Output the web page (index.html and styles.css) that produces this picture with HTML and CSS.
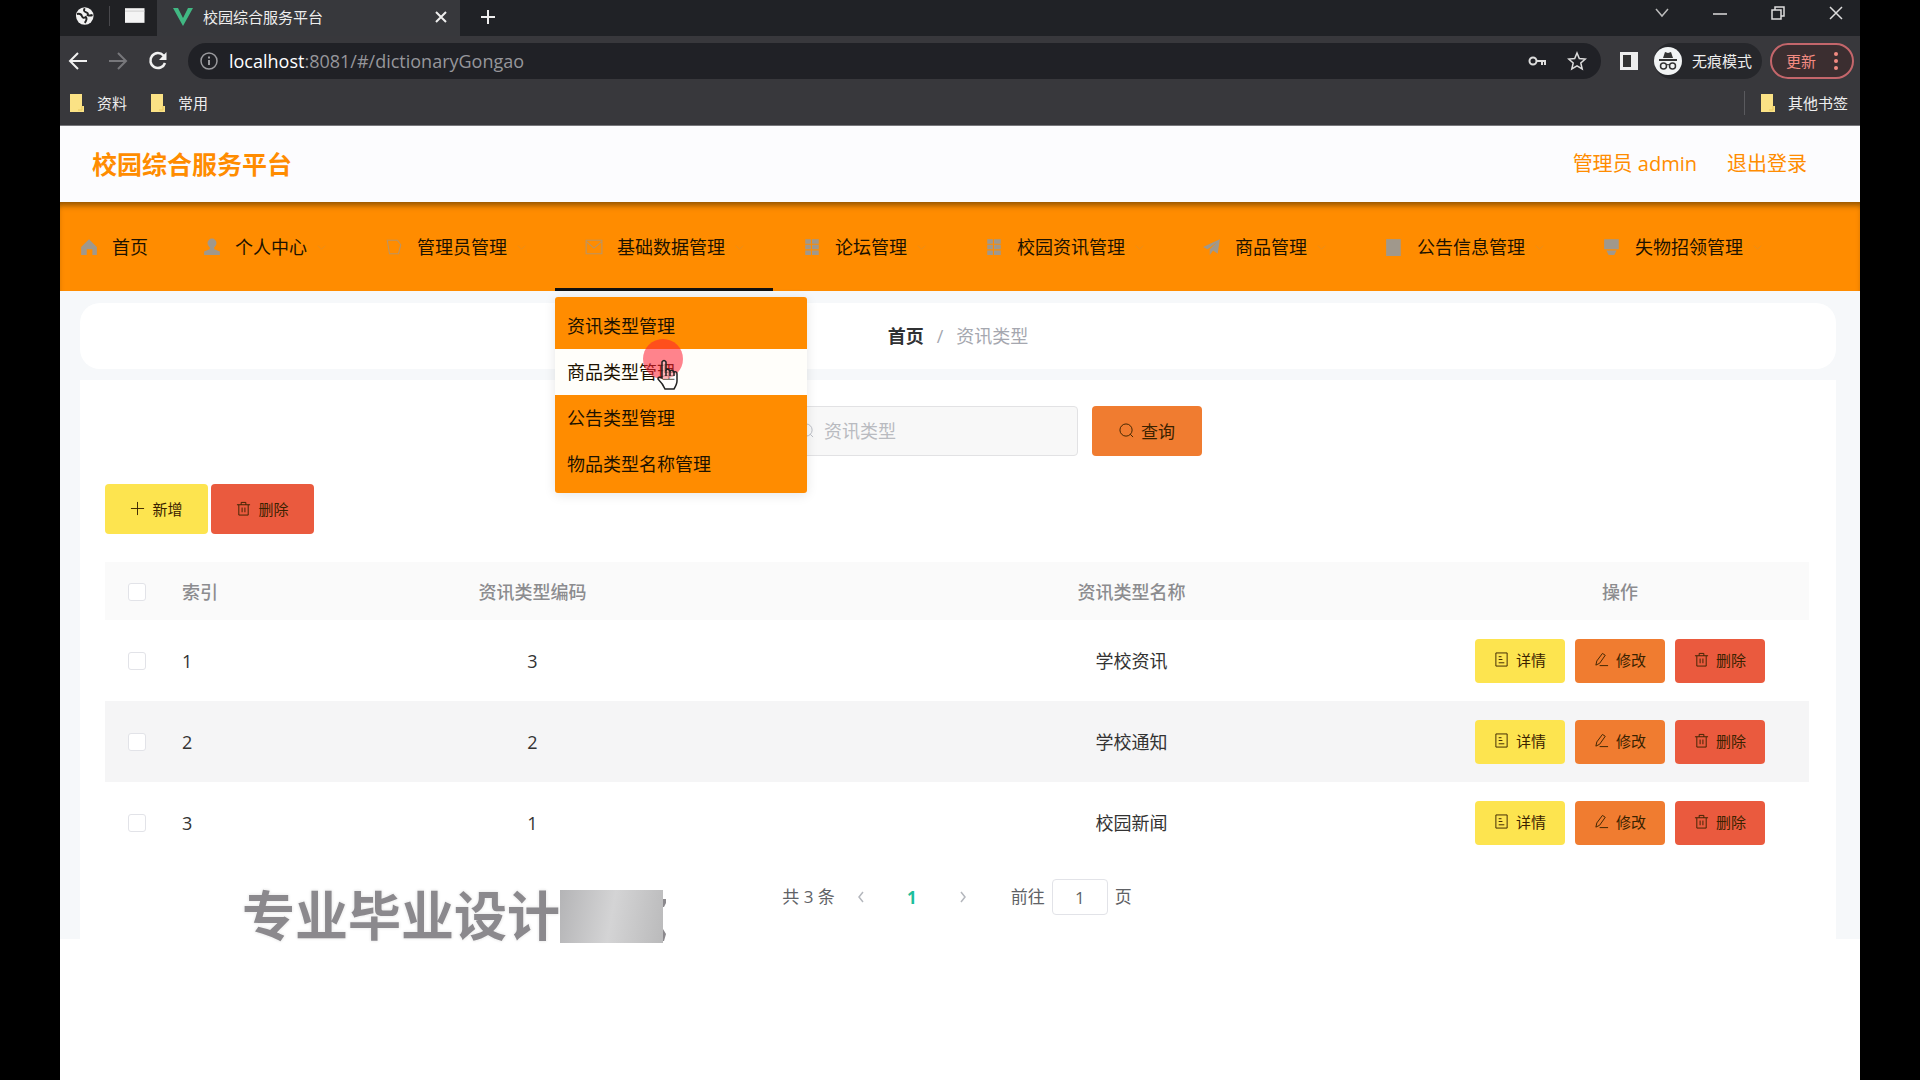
FILE: index.html
```
<!DOCTYPE html>
<html lang="zh-CN">
<head>
  <meta charset="UTF-8">
  <meta name="viewport" content="width=device-width, initial-scale=1.0">
  <title>校园综合服务平台</title>
  <link rel="stylesheet" href="styles.css">
</head>
<body>

  <!-- shared icons -->
  <svg class="sprite" aria-hidden="true">
    <symbol id="i-folder" viewBox="0 0 16 18"><path d="M1 0h12v12h2v6H1z" fill="#fbe285"/><path d="M13 12v4H9" stroke="#e8c95c" fill="none"/></symbol>
    <symbol id="i-list" viewBox="0 0 16 16"><path d="M2 1h5v4H2zM8 1h6v4H8zM2 6h5v4H2zM8 6h6v4H8zM2 11h5v4H2zM8 11h6v4H8z" fill="currentColor"/></symbol>
    <symbol id="i-arrow" viewBox="0 0 10 10"><path d="M1 3l4 4 4-4" stroke="currentColor" fill="none"/></symbol>
    <symbol id="i-trash" viewBox="0 0 16 16"><path d="M1 4h14M3 4v11h10V4M5.500 4V1.500h5V4M6.500 7v5M9.500 7v5" stroke="currentColor" fill="none"/></symbol>
    <symbol id="i-doc" viewBox="0 0 16 16"><path d="M2 1h12v14H2zM5 5h3M5 8h4M5 11.500h6" stroke="currentColor" fill="none"/></symbol>
    <symbol id="i-edit" viewBox="0 0 16 16"><path d="M2 14l1-4.500L9 1.500l3 2-6 8.500zM6 14.500h9" stroke="currentColor" fill="none"/></symbol>
    <symbol id="i-search" viewBox="0 0 16 16"><circle cx="7.500" cy="7.500" r="6.500" stroke="currentColor" fill="none"/><path d="M12 12l3 3" stroke="currentColor"/></symbol>
  </svg>

  <div class="browser">
    <div class="tab-strip">
      <div class="pinned">
        <svg width="20" height="20" viewBox="0 0 20 20"><circle cx="10" cy="10" r="9" fill="#f1f1f1"/><path d="M2 8q4-1 5 2t4 1q2 2-1 6M10 2q-2 3 1 4t2 3q2 1 5 0" stroke="#222" stroke-width="2" fill="none"/></svg>
        <span class="divider"></span>
        <svg width="22" height="18" viewBox="0 0 22 18"><path d="M1 1h20v15H1z" fill="#f4f4f4"/><path d="M1 4h20" stroke="#ccc"/></svg>
      </div>
      <div class="tab">
        <svg width="20" height="18" viewBox="0 0 20 18"><path d="M0 0h5l5 10 5-10h5L10 18z" fill="#41b883"/></svg>
        <span class="tab-title">校园综合服务平台</span>
        <button class="icon-btn" aria-label="关闭标签页"><svg width="12" height="12" viewBox="0 0 12 12"><path d="M1 1l10 10M11 1L1 11" stroke="#eee" stroke-width="2"/></svg></button>
      </div>
      <button class="icon-btn new-tab" aria-label="新标签页"><svg width="16" height="16" viewBox="0 0 16 16"><path d="M8 1v14M1 8h14" stroke="#eee" stroke-width="2"/></svg></button>
      <div class="window-btns">
        <button class="icon-btn" aria-label="搜索标签页"><svg width="14" height="10" viewBox="0 0 14 10"><path d="M1 1l6 7 6-7" stroke="#bbb" stroke-width="1.500" fill="none"/></svg></button>
        <button class="icon-btn" aria-label="最小化"><svg width="14" height="10" viewBox="0 0 14 10"><path d="M0 6h14" stroke="#ddd" stroke-width="1.500"/></svg></button>
        <button class="icon-btn" aria-label="还原"><svg width="14" height="14" viewBox="0 0 14 14"><path d="M1 4h9v9H1zM4 4V1h9v9h-3" stroke="#ddd" stroke-width="1.500" fill="none"/></svg></button>
        <button class="icon-btn" aria-label="关闭"><svg width="14" height="14" viewBox="0 0 14 14"><path d="M1 1l12 12M13 1L1 13" stroke="#ddd" stroke-width="1.500"/></svg></button>
      </div>
    </div>

    <div class="toolbar">
      <button class="icon-btn" aria-label="后退"><svg width="20" height="18" viewBox="0 0 20 18"><path d="M19 9H2M10 1L2 9l8 8" stroke="#f1f1f1" stroke-width="2" fill="none"/></svg></button>
      <button class="icon-btn" aria-label="前进"><svg width="20" height="18" viewBox="0 0 20 18"><path d="M1 9h17M10 1l8 8-8 8" stroke="#77777b" stroke-width="2" fill="none"/></svg></button>
      <button class="icon-btn" aria-label="刷新"><svg width="20" height="20" viewBox="0 0 20 20"><path d="M17 12a7.500 7.500 0 1 1-1.500-7.500L17 6" stroke="#f1f1f1" stroke-width="2.500" fill="none"/><path d="M18.500 1v8H11z" fill="#f1f1f1"/></svg></button>
      <div class="address">
        <svg width="18" height="18" viewBox="0 0 18 18"><circle cx="9" cy="9" r="8" stroke="#9a9a9e" stroke-width="1.500" fill="none"/><path d="M9 8v5M9 4.500v2" stroke="#9a9a9e" stroke-width="2"/></svg>
        <span class="url"><b>localhost</b>:8081/#/dictionaryGongao</span>
        <svg width="18" height="12" viewBox="0 0 18 12"><circle cx="5" cy="6" r="3.500" stroke="#ddd" stroke-width="2" fill="none"/><path d="M8 6h9v4M14 6v4" stroke="#ddd" stroke-width="2" fill="none"/></svg>
        <svg width="20" height="20" viewBox="0 0 20 20"><path d="M10 2l2.300 5.500 6 .5-4.500 4 1.400 6-5.200-3.200L4.800 18l1.400-6L1.700 8l6-.5z" stroke="#ddd" stroke-width="1.500" fill="none"/></svg>
      </div>
      <button class="icon-btn side-panel" aria-label="侧边栏"><svg width="18" height="18" viewBox="0 0 18 18"><path d="M0 0h18v18H0z" fill="#eee"/><path d="M3 3h8v12H3z" fill="#333"/></svg></button>
      <div class="incognito">
        <svg width="28" height="28" viewBox="0 0 28 28"><circle cx="14" cy="14" r="14" fill="#f1f3f4"/><path d="M9 11l2-6 3 1 3-1 2 6zM5 12h18v2H5z" fill="#333"/><path d="M12.500 18q1.500-1 3 0" stroke="#333" fill="none"/><circle cx="9.500" cy="19" r="3" stroke="#333" stroke-width="1.500" fill="none"/><circle cx="18.500" cy="19" r="3" stroke="#333" stroke-width="1.500" fill="none"/></svg>
        <span>无痕模式</span>
      </div>
      <button class="update">更新
        <svg width="4" height="18" viewBox="0 0 4 18"><circle cx="2" cy="2" r="2" fill="#f28b82"/><circle cx="2" cy="9" r="2" fill="#f28b82"/><circle cx="2" cy="16" r="2" fill="#f28b82"/></svg>
      </button>
    </div>

    <div class="bookmarks">
      <a href="#"><svg width="16" height="18"><use href="#i-folder"/></svg>资料</a>
      <a href="#"><svg width="16" height="18"><use href="#i-folder"/></svg>常用</a>
      <a href="#" class="other"><svg width="16" height="18"><use href="#i-folder"/></svg>其他书签</a>
    </div>
  </div>

  <header class="header">
    <h1>校园综合服务平台</h1>
    <div class="user">
      <span>管理员 admin</span>
      <a href="#">退出登录</a>
    </div>
  </header>

  <nav class="nav">
    <ul class="menu">
      <li class="home"><a href="#"><svg class="ico" viewBox="0 0 16 16"><path d="M8 1l7 7v7h-4v-5H6v5H1V8z" fill="currentColor"/></svg>首页</a></li>
      <li><a href="#"><svg class="ico" viewBox="0 0 16 16"><circle cx="8" cy="4.500" r="4" fill="currentColor"/><path d="M6 8h4v2l5 2v3H1v-3l5-2z" fill="currentColor"/></svg>个人中心<svg class="arrow"><use href="#i-arrow"/></svg></a></li>
      <li><a href="#"><svg class="ico faint" viewBox="0 0 16 16"><path d="M2 2h9l3 4-2 8H4z" stroke="currentColor" fill="none"/></svg>管理员管理<svg class="arrow"><use href="#i-arrow"/></svg></a></li>
      <li class="active"><a href="#"><svg class="ico faint" viewBox="0 0 16 16"><path d="M1 2h14v12H1zM1 3l7 6 7-6" stroke="currentColor" fill="none"/></svg>基础数据管理<svg class="arrow"><use href="#i-arrow"/></svg></a>
        <ul class="submenu">
          <li><a href="#">资讯类型管理</a></li>
          <li><a href="#" class="hover">商品类型管理</a></li>
          <li><a href="#">公告类型管理</a></li>
          <li><a href="#">物品类型名称管理</a></li>
        </ul>
        <div class="pointer">
          <svg width="24" height="32" viewBox="0 0 24 32"><path d="M7 19V3q2-3 4 0v8q2-2 4 1 2-2 4 1 3-1 3 2v7q0 3-3 8H10q-2-5-7-10 0-3 4-1z" fill="#fff" fill-opacity=".4" stroke="#222" stroke-width="1.500"/><path d="M11 11v6M15 12v5M19 13v4" stroke="#222" stroke-width="1.500"/></svg>
        </div>
      </li>
      <li><a href="#"><svg class="ico"><use href="#i-list"/></svg>论坛管理<svg class="arrow"><use href="#i-arrow"/></svg></a></li>
      <li><a href="#"><svg class="ico"><use href="#i-list"/></svg>校园资讯管理<svg class="arrow"><use href="#i-arrow"/></svg></a></li>
      <li><a href="#"><svg class="ico" viewBox="0 0 16 16"><path d="M0 8L15 1l-2 13-4-3-3 4v-5l6-6-8 6z" fill="currentColor"/></svg>商品管理<svg class="arrow"><use href="#i-arrow"/></svg></a></li>
      <li><a href="#"><svg class="ico" viewBox="0 0 16 16"><path d="M1 1h13v15H1z" fill="currentColor"/></svg>公告信息管理<svg class="arrow"><use href="#i-arrow"/></svg></a></li>
      <li><a href="#"><svg class="ico" viewBox="0 0 16 16"><path d="M1 1h13v9H1zM3 11h9l-2 4H5z" fill="currentColor"/></svg>失物招领管理<svg class="arrow"><use href="#i-arrow"/></svg></a></li>
    </ul>
  </nav>

  <main class="main">
    <div class="breadcrumb">
      <a href="#">首页</a><i>/</i><span>资讯类型</span>
    </div>

    <div class="content">
      <form class="search">
        <div class="search-box">
          <svg class="btn-ico"><use href="#i-search"/></svg>
          <input type="text" placeholder="资讯类型" aria-label="资讯类型">
        </div>
        <button type="button" class="btn orange"><svg class="btn-ico"><use href="#i-search"/></svg>查询</button>
      </form>

      <div class="actions">
        <button class="btn yellow"><svg class="btn-ico" viewBox="0 0 16 16"><path d="M8 1v14M1 8h14" stroke="currentColor"/></svg>新增</button>
        <button class="btn red"><svg class="btn-ico"><use href="#i-trash"/></svg>删除</button>
      </div>

      <table class="table">
        <colgroup>
          <col class="c-check"><col class="c-index"><col class="c-data"><col class="c-data"><col class="c-ops">
        </colgroup>
        <thead>
          <tr>
            <th><input type="checkbox" aria-label="全选"></th>
            <th class="left">索引</th>
            <th>资讯类型编码</th>
            <th>资讯类型名称</th>
            <th>操作</th>
          </tr>
        </thead>
        <tbody>
          <tr>
            <td><input type="checkbox" aria-label="选择第1行"></td>
            <td class="left">1</td>
            <td>3</td>
            <td>学校资讯</td>
            <td>
              <div class="ops">
                <button class="btn yellow"><svg class="btn-ico"><use href="#i-doc"/></svg>详情</button>
                <button class="btn orange"><svg class="btn-ico"><use href="#i-edit"/></svg>修改</button>
                <button class="btn red"><svg class="btn-ico"><use href="#i-trash"/></svg>删除</button>
              </div>
            </td>
          </tr>
          <tr>
            <td><input type="checkbox" aria-label="选择第2行"></td>
            <td class="left">2</td>
            <td>2</td>
            <td>学校通知</td>
            <td>
              <div class="ops">
                <button class="btn yellow"><svg class="btn-ico"><use href="#i-doc"/></svg>详情</button>
                <button class="btn orange"><svg class="btn-ico"><use href="#i-edit"/></svg>修改</button>
                <button class="btn red"><svg class="btn-ico"><use href="#i-trash"/></svg>删除</button>
              </div>
            </td>
          </tr>
          <tr>
            <td><input type="checkbox" aria-label="选择第3行"></td>
            <td class="left">3</td>
            <td>1</td>
            <td>校园新闻</td>
            <td>
              <div class="ops">
                <button class="btn yellow"><svg class="btn-ico"><use href="#i-doc"/></svg>详情</button>
                <button class="btn orange"><svg class="btn-ico"><use href="#i-edit"/></svg>修改</button>
                <button class="btn red"><svg class="btn-ico"><use href="#i-trash"/></svg>删除</button>
              </div>
            </td>
          </tr>
        </tbody>
      </table>

      <div class="pagination">
        <span>共 3 条</span>
        <button class="page-btn" aria-label="上一页"><svg width="8" height="12" viewBox="0 0 8 12"><path d="M6 1L2 6l4 5" stroke="#b4b7bd" stroke-width="1.500" fill="none"/></svg></button>
        <button class="page-btn current">1</button>
        <button class="page-btn" aria-label="下一页"><svg width="8" height="12" viewBox="0 0 8 12"><path d="M2 1l4 5-4 5" stroke="#b4b7bd" stroke-width="1.500" fill="none"/></svg></button>
        <label class="jump">前往 <input type="text" value="1"> 页</label>
      </div>
    </div>
  </main>

  <div class="watermark">
    <span>专业毕业设计</span>
    <i class="patch"></i>
    <svg width="4" height="54" viewBox="0 0 4 54"><path d="M0 10h3v4l-2 4H0zM0 40l3 5-2 7H0z" fill="#8b898d"/></svg>
  </div>

</body>
</html>
```

FILE: styles.css
```
/* General */
* {
  box-sizing: border-box;
}

html {
  background: #000;
}

body {
  margin: 0 60px;
  min-height: 100vh;
  position: relative;
  background: #fff;
  font-family: "Open Sans", "Noto Sans CJK SC", sans-serif;
  font-size: 18px;
  line-height: 24px;
  color: #333;
}

a {
  color: inherit;
  text-decoration: none;
}

button,
input {
  font-family: inherit;
}

ul {
  list-style: none;
  margin: 0;
  padding: 0;
}

i {
  font-style: normal;
}

.sprite {
  position: absolute;
  width: 0;
  height: 0;
}

/* Browser bar */
.browser {
  background: #38383c;
  color: #eee;
  font-size: 15px;
  border-bottom: 1px solid #77777b;
}

.tab-strip {
  display: flex;
  align-items: center;
  height: 36px;
  background: #202226;
}

.icon-btn {
  display: flex;
  align-items: center;
  justify-content: center;
  padding: 0;
  border: none;
  background: none;
}

.pinned {
  display: flex;
  align-items: center;
  gap: 14px;
  width: 97px;
  height: 36px;
  padding: 0 12px 4px 15px;
  background: #202124;
}

.divider {
  width: 1px;
  height: 20px;
  background: #48484c;
}

.tab {
  display: flex;
  align-items: center;
  gap: 10px;
  width: 303px;
  height: 36px;
  padding: 0 13px 2px 16px;
  background: #37383c;
}

.tab-title {
  flex: 1;
}

.new-tab {
  margin: 0 20px 2px;
}

.window-btns {
  display: flex;
  gap: 44px;
  margin-left: auto;
  padding: 0 17px 10px 0;
}

.toolbar {
  display: flex;
  align-items: center;
  gap: 20px;
  height: 49px;
  padding: 0 6px 0 8px;
}

.address {
  display: flex;
  flex: 1;
  align-items: center;
  gap: 21px;
  height: 36px;
  padding: 0 14px 0 12px;
  border-radius: 18px;
  background: #202126;
}

.url {
  flex: 1;
  margin-left: -10px;
  font-size: 18px;
  color: #96969b;
}

.url b {
  font-weight: 400;
  color: #fff;
}

.side-panel {
  margin-left: -1px;
}

.incognito {
  display: flex;
  align-items: center;
  gap: 10px;
  margin-left: -4px;
  height: 36px;
  padding-right: 10px;
  border-radius: 18px;
  background: #26272b;
}

.update {
  display: flex;
  align-items: center;
  justify-content: space-between;
  width: 84px;
  height: 36px;
  margin-left: -12px;
  padding: 0 14px 0 14px;
  border: 2px solid #c4666b;
  border-radius: 18px;
  background: #3b2e30;
  font-size: 15px;
  color: #f28b82;
}

.bookmarks {
  display: flex;
  align-items: center;
  gap: 23px;
  height: 40px;
  padding: 0 12px 5px 9px;
}

.bookmarks a {
  display: flex;
  align-items: center;
  gap: 12px;
}

.bookmarks .other {
  margin-left: auto;
  padding-left: 15px;
  border-left: 1px solid #5a5a5e;
}

/* Header */
.header {
  display: flex;
  align-items: center;
  justify-content: space-between;
  height: 76px;
  padding: 0 53px 0 32px;
  background: #fcfcfe;
  color: #ff8c00;
}

.header h1 {
  margin: 0;
  font-size: 25px;
  font-weight: 700;
}

.user {
  display: flex;
  gap: 30px;
  font-size: 20px;
}

/* Nav */
.nav {
  background: #ff8c00;
  box-shadow: inset 0 6px 6px -3px rgba(60, 40, 0, 0.6);
  color: #1c1200;
}

.menu {
  display: flex;
}

.menu > li {
  position: relative;
  border-bottom: 3px solid transparent;
}

.menu > li > a {
  display: flex;
  align-items: center;
  height: 86px;
  padding: 4px 29px 0 30px;
  white-space: nowrap;
}

.menu > .home > a {
  padding: 4px 25px 0 20px;
}

.menu > .active {
  border-bottom-color: #111;
}

.ico {
  width: 18px;
  height: 18px;
  margin-right: 14px;
  color: #a0988c;
}

.faint {
  opacity: 0.7;
}

.arrow {
  width: 9px;
  height: 9px;
  margin-left: 10px;
  color: #909399;
  opacity: 0.2;
}

.submenu {
  position: absolute;
  top: 95px;
  left: 0;
  z-index: 5;
  width: 252px;
  padding: 6px 0;
  border-radius: 3px;
  background: #ff8c00;
  box-shadow: 0 2px 12px rgba(0, 0, 0, 0.1);
}

.submenu a {
  display: block;
  padding: 0 12px;
  line-height: 46px;
}

.submenu .hover {
  background: #fffefa;
}

/* Mouse pointer with click highlight */
.pointer {
  position: absolute;
  top: 137px;
  left: 88px;
  z-index: 6;
  width: 40px;
  height: 40px;
  padding: 20px 0 0 12px;
  border-radius: 50%;
  background: rgba(255, 30, 50, 0.55);
}

/* Main */
.main {
  padding: 12px 24px 0 20px;
  background: #f6f8fa;
}

.breadcrumb {
  display: flex;
  align-items: center;
  justify-content: center;
  gap: 13px;
  height: 66px;
  border-radius: 20px;
  background: #fff;
  color: #a5a7af;
}

.breadcrumb a {
  font-weight: 700;
  color: #303133;
}

.content {
  margin-top: 11px;
  padding: 26px 27px 24px 25px;
  background: #fff;
}

.search {
  display: flex;
  justify-content: center;
  gap: 14px;
  padding-left: 75px;
}

.search-box {
  position: relative;
}

.search-box .btn-ico {
  position: absolute;
  top: 17px;
  left: 12px;
  color: #b9bcc3;
}

.search-box input {
  width: 291px;
  height: 50px;
  padding: 0 12px 0 36px;
  border: 1px solid #e2e2e4;
  border-radius: 4px;
  background: #f8f8f8;
  font-size: 18px;
}

.search-box input::placeholder {
  color: #b9bbc0;
}

/* Buttons */
.btn {
  display: flex;
  align-items: center;
  justify-content: center;
  gap: 7px;
  width: 90px;
  height: 44px;
  padding: 0 0 2px;
  border: none;
  border-radius: 4px;
  font-size: 15px;
  color: #3a2200;
}

.search .btn {
  width: 110px;
  height: 50px;
  font-size: 17px;
}

.actions .btn {
  width: 103px;
  height: 50px;
}

.btn-ico {
  width: 15px;
  height: 15px;
}

.yellow {
  background: #fde44f;
}

.orange {
  background: #f07c30;
}

.red {
  background: #ea5a3e;
}

.actions {
  display: flex;
  gap: 3px;
  margin-top: 28px;
}

/* Table */
.table {
  width: 100%;
  margin-top: 28px;
  table-layout: fixed;
  border-collapse: collapse;
  text-align: center;
}

.c-check {
  width: 64px;
}

.c-index {
  width: 64px;
}

.c-ops {
  width: 378px;
}

.table th {
  height: 58px;
  padding: 2px 0 0;
  background: #fafafa;
  font-weight: 500;
  color: #8c8c8f;
}

.table td {
  height: 81px;
  padding: 0;
}

.table .left {
  padding-left: 13px;
  text-align: left;
}

.table tbody tr:nth-child(even) {
  background: #f5f5f6;
}

.table input {
  display: block;
  appearance: none;
  width: 18px;
  height: 18px;
  margin: 0 auto;
  border: 1px solid #e2e3e8;
  border-radius: 3px;
  background: #fff;
}

.ops {
  display: flex;
  justify-content: center;
  gap: 10px;
}

/* Pagination */
.pagination {
  display: flex;
  align-items: center;
  justify-content: center;
  margin-top: 16px;
  font-size: 17px;
  color: #606266;
}

.page-btn {
  display: flex;
  align-items: center;
  justify-content: center;
  width: 50px;
  height: 36px;
  margin-left: 1px;
  padding: 0;
  border: none;
  background: none;
  font-size: 17px;
}

.current {
  font-weight: 700;
  color: #1dbf9c;
}

.jump {
  display: flex;
  align-items: center;
  gap: 7px;
  margin-left: 23px;
}

.jump input {
  width: 56px;
  height: 36px;
  padding: 0;
  border: 1px solid #e2e3e8;
  border-radius: 4px;
  font-size: 17px;
  text-align: center;
  color: #606266;
}

/* Watermark */
.watermark {
  position: absolute;
  top: 889px;
  left: 182px;
  z-index: 10;
  display: flex;
  align-items: center;
  height: 54px;
  font-size: 53px;
  line-height: 54px;
  font-weight: 700;
  color: #8b898d;
  text-shadow: 0 0 3px #fff, 0 0 3px #ccc;
}

.patch {
  width: 103px;
  height: 53px;
  background: linear-gradient(100deg, #b4b4b6, #d4d4d5 50%, #bababb);
}
```
